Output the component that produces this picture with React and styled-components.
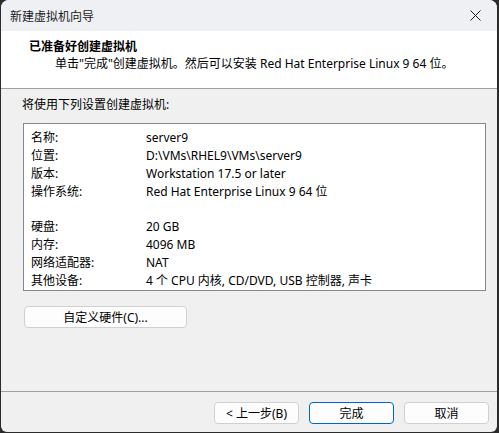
import styled, { createGlobalStyle } from 'styled-components';

const Global = createGlobalStyle`
  html, body {
    margin: 0;
    padding: 0;
    background: #2b2b2b;
  }
  body {
    font-family: "Noto Sans", "Noto Sans CJK SC", sans-serif;
    font-size: 12px;
    color: #000;
  }
`;

const Frame = styled.div`
  width: 499px;
  height: 433px;
  box-sizing: border-box;
  padding: 0 2px 1px 1px;
  background: #2b2b2b;
`;

const Window = styled.div`
  height: 100%;
  display: flex;
  flex-direction: column;
  background: #f0f0f0;
  border-radius: 8px 8px 6px 6px;
  overflow: hidden;
`;

const TitleBar = styled.div`
  height: 31px;
  flex-shrink: 0;
  display: flex;
  align-items: center;
  justify-content: space-between;
  padding: 0 15px 0 9px;
  background: #eff0f4;
  color: #1a1a1a;
`;

const Close = styled.button`
  width: 14px;
  height: 14px;
  padding: 0;
  border: 0;
  background: none;
  display: flex;
  align-items: center;
  justify-content: center;
`;

const Header = styled.div`
  height: 58px;
  flex-shrink: 0;
  box-sizing: border-box;
  background: #fff;
  border-bottom: 1px solid #a0a0a0;
  padding: 7px 0 0 28px;
`;

const Heading = styled.div`
  font-weight: 700;
  line-height: 17px;
`;

const Sub = styled.div`
  padding-left: 26px;
  line-height: 17px;
`;

const Body = styled.div`
  flex: 1;
  padding: 7px 12px 0 21px;
`;

const Intro = styled.div`
  line-height: 17px;
  margin-bottom: 10px;
`;

const Summary = styled.div`
  width: 463px;
  height: 168px;
  background: #fff;
  border: 1px solid #828790;
  padding: 5px 0 0 7px;
  box-sizing: border-box;
  margin-left: 1px;
`;

const Row = styled.div`
  display: grid;
  grid-template-columns: 115px 1fr;
  height: 17.9px;
  line-height: 17.9px;
  white-space: nowrap;
`;

const Button = styled.button`
  font: inherit;
  color: #000;
  height: 22px;
  width: ${(p) => p.$w || 85}px;
  background: #fdfdfd;
  border: 1px solid ${(p) => (p.$primary ? '#0067c0' : '#d0d0d0')};
  border-radius: 4px;
  padding: 0;
  box-sizing: border-box;
`;

const Customize = styled(Button)`
  margin: 15px 0 0 2px;
`;

const Footer = styled.div`
  height: 41px;
  flex-shrink: 0;
  box-sizing: border-box;
  border-top: 1px solid #a0a0a0;
  display: flex;
  justify-content: flex-end;
  align-items: flex-start;
  gap: 10px;
  padding: 10px 8px 0 0;
`;

const rows = [
  ['名称:', 'server9'],
  ['位置:', 'D:\\VMs\\RHEL9\\VMs\\server9'],
  ['版本:', 'Workstation 17.5 or later'],
  ['操作系统:', 'Red Hat Enterprise Linux 9 64 位'],
  ['', ''],
  ['硬盘:', '20 GB'],
  ['内存:', '4096 MB'],
  ['网络适配器:', 'NAT'],
  ['其他设备:', '4 个 CPU 内核, CD/DVD, USB 控制器, 声卡'],
];

export default function App() {
  return (
    <Frame>
      <Global />
      <Window>
        <TitleBar>
          <span>新建虚拟机向导</span>
          <Close aria-label="关闭">
            <svg width="11" height="11" viewBox="0 0 11 11">
              <path d="M0.5 0.5L10.5 10.5M10.5 0.5L0.5 10.5" stroke="#1a1a1a" strokeWidth="1" />
            </svg>
          </Close>
        </TitleBar>
        <Header>
          <Heading>已准备好创建虚拟机</Heading>
          <Sub>单击"完成"创建虚拟机。然后可以安装 Red Hat Enterprise Linux 9 64 位。</Sub>
        </Header>
        <Body>
          <Intro>将使用下列设置创建虚拟机:</Intro>
          <Summary>
            {rows.map(([k, v], i) => (
              <Row key={i}>
                <span>{k}</span>
                <span>{v}</span>
              </Row>
            ))}
          </Summary>
          <Customize $w={163}>自定义硬件(C)...</Customize>
        </Body>
        <Footer>
          <Button>&lt; 上一步(B)</Button>
          <Button $primary>完成</Button>
          <Button>取消</Button>
        </Footer>
      </Window>
    </Frame>
  );
}
